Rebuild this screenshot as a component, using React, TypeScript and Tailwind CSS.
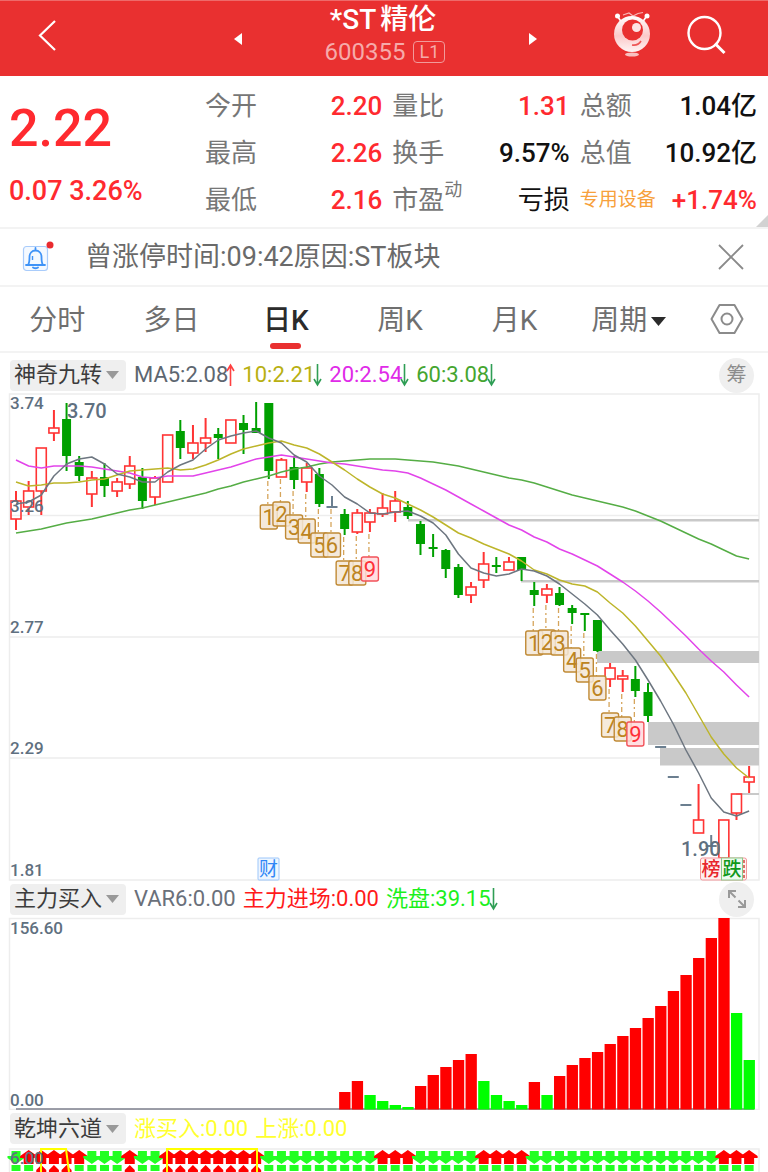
import { ReactNode } from "react";

type Kind = "up" | "down" | "flat";
// kind, body top, body bottom, high, low
type Candle = [Kind, number, number, number, number];

const STEP = 12.64;
const xAt = (i: number) => 16 + i * STEP;

const FONT = "font-['Roboto','Noto_Sans_CJK_SC',sans-serif]";

const CANDLES: Candle[] = [
  ["up", 501, 519, 491, 530], ["up", 491, 507, 481, 515], ["up", 448, 491, 448, 515],
  ["up", 428, 433, 410, 441], ["down", 419, 456, 403, 471], ["down", 462, 476, 456, 481],
  ["up", 478, 494, 471, 507], ["down", 477, 486, 463, 497], ["up", 482, 491, 478, 497],
  ["up", 466, 484, 456, 489], ["down", 477, 501, 468, 509], ["up", 478, 497, 476, 505],
  ["up", 435, 482, 435, 482], ["down", 431, 448, 420, 459], ["up", 443, 453, 425, 459],
  ["up", 438, 443, 418, 452], ["down", 434, 438, 428, 459], ["up", 420, 443, 420, 443],
  ["down", 423, 430, 415, 454], ["down", 428, 433, 402, 433], ["down", 403, 471, 403, 479],
  ["up", 460, 477, 458, 477], ["down", 467, 480, 456, 489], ["up", 468, 482, 463, 492],
  ["down", 474, 504, 468, 507], ["flat", 506, 507, 496, 507], ["down", 514, 529, 509, 535],
  ["up", 513, 532, 509, 534], ["up", 513, 522, 509, 532], ["up", 508, 514, 493, 517],
  ["up", 501, 512, 491, 522], ["down", 507, 516, 501, 519], ["down", 524, 544, 521, 555],
  ["down", 547, 549, 534, 557], ["down", 550, 569, 549, 578], ["down", 567, 595, 564, 598],
  ["up", 587, 595, 582, 603], ["up", 564, 580, 552, 588], ["down", 565, 567, 557, 573],
  ["up", 562, 570, 557, 570], ["down", 557, 570, 557, 581], ["down", 590, 595, 582, 606],
  ["up", 589, 595, 584, 603], ["down", 593, 605, 587, 606], ["down", 608, 613, 605, 624],
  ["down", 613, 615, 613, 631], ["down", 620, 651, 620, 652], ["up", 668, 679, 663, 687],
  ["up", 676, 679, 670, 692], ["down", 679, 691, 666, 697], ["down", 692, 716, 683, 722],
  ["flat", 746, 747, 746, 747], ["flat", 776, 777, 776, 777], ["flat", 804, 805, 804, 805],
  ["up", 820, 833, 784, 833], ["flat", 845, 846, 835, 846], ["up", 820, 858, 820, 858],
  ["up", 794, 813, 794, 820], ["up", 777, 782, 766, 793],
];

const MA5 = [
  504, 502, 495, 476, 464, 459, 457, 464, 474, 477, 482, 482, 472, 465, 460, 449, 440, 436, 433, 431,
  438, 443, 455, 462, 476, 485, 497, 504, 513, 514, 512, 511, 516, 523, 535, 554, 568, 573, 576, 574,
  569, 571, 576, 584, 594, 604, 615, 630, 644, 660, 680, 701, 724, 750, 773, 798, 812, 816, 811,
];
const MA10 = [
  482, 486, 485, 483, 483, 482, 480, 479, 475, 471, 470, 469, 468, 470, 469, 465, 460, 454, 449, 446,
  443, 441, 445, 448, 454, 462, 470, 479, 487, 494, 498, 504, 510, 517, 525, 533, 538, 544, 549, 554,
  561, 570, 574, 580, 584, 586, 592, 603, 613, 626, 641, 656, 674, 693, 715, 737, 754, 768, 778,
];
const MA20 = [
  460, 466, 468, 466, 466, 466, 467, 469, 471, 473, 477, 478, 476, 476, 476, 473, 470, 467, 463, 459,
  457, 455, 457, 459, 461, 463, 464, 466, 468, 470, 471, 473, 478, 484, 490, 497, 504, 511, 518, 525,
  530, 537, 542, 549, 554, 560, 566, 574, 582, 591, 601, 612, 624, 636, 649, 661, 672, 685, 697,
];
const MA60 = [
  533, 531, 529, 526, 523, 521, 519, 516, 513, 510, 508, 505, 502, 499, 496, 493, 489, 486, 482, 479,
  476, 472, 469, 467, 464, 462, 461, 460, 459, 459, 459, 460, 461, 462, 464, 466, 469, 472, 475, 478,
  480, 483, 487, 491, 495, 498, 501, 504, 507, 511, 516, 521, 527, 533, 539, 544, 550, 556, 559,
];

// candle index, badge centre y, digit
const TURNS: [number, number, number][] = [
  [20, 517, 1], [21, 514, 2], [22, 527, 3], [23, 531, 4], [24, 545, 5], [25, 545, 6], [26, 573, 7], [27, 573, 8], [28, 569, 9],
  [41, 643, 1], [42, 642, 2], [43, 643, 3], [44, 660, 4], [45, 670, 5], [46, 688, 6], [47, 725, 7], [48, 729, 8], [49, 734, 9],
];

// first bar sits at candle 26
const BARS: [string, number][] = [
  ["r", 1092], ["r", 1081], ["g", 1095], ["g", 1101], ["g", 1105], ["g", 1107], ["r", 1086], ["r", 1075], ["r", 1067],
  ["r", 1060], ["r", 1054], ["g", 1081], ["g", 1095], ["g", 1101], ["g", 1105], ["r", 1082], ["g", 1095], ["r", 1076],
  ["r", 1065], ["r", 1058], ["r", 1052], ["r", 1044], ["r", 1036], ["r", 1028], ["r", 1018], ["r", 1006], ["r", 991],
  ["r", 975], ["r", 958], ["r", 938], ["r", 918], ["g", 1013], ["g", 1060],
];

const TREND = "grrrrrgggrggrrrrrrrrgggggggggrrrgggggrrrrgggggggggggggggrrr";

const line = (ys: number[]) => ys.map((y, i) => `${xAt(i).toFixed(1)},${y}`).join(" ");

function CandleMark({ candle, i }: { candle: Candle; i: number }) {
  const [kind, top, bottom, high, low] = candle;
  const x = xAt(i);
  if (kind === "flat") {
    return (
      <g stroke="#6b7f90" strokeWidth={2}>
        <path d={`M${x - 5.5} ${bottom}h11`} />
        {high < top && <path d={`M${x} ${high}V${low}`} />}
      </g>
    );
  }
  if (kind === "down") {
    return (
      <g fill="#00a000" stroke="#00a000">
        <path d={`M${x} ${high}V${low}`} strokeWidth={2} />
        <rect x={x - 4.5} y={top} width={9} height={bottom - top} stroke="none" />
      </g>
    );
  }
  return (
    <g fill="none" stroke="#ff3434" strokeWidth={1.6}>
      <path d={`M${x} ${high}V${top}M${x} ${bottom}V${low}`} strokeWidth={2} />
      <rect x={x - 5} y={top} width={10} height={bottom - top} />
    </g>
  );
}

function TurnBadge({ i, y, n }: { i: number; y: number; n: number }) {
  const x = xAt(i);
  const low = CANDLES[i][4];
  const last = n === 9;
  return (
    <g>
      <path d={`M${x - 1} ${low + 2}V${y - 12}`} stroke="#d6a55c" strokeWidth={1.3} strokeDasharray="5 3 2 3" />
      <rect
        x={x - 8.5} y={y - 12} width={17} height={24} rx={2} strokeWidth={1.4}
        fill={last ? "#ffd9dc" : "#f3e6d6"} fillOpacity={0.85} stroke={last ? "#f2525a" : "#c08a35"}
      />
      <text x={x} y={y + 8} fontSize={22} textAnchor="middle" fill={last ? "#ff3038" : "#bd8420"}>{n}</text>
    </g>
  );
}

function PriceChart() {
  return (
    <svg viewBox="0 393 768 488" className="block w-full" role="img" aria-label="日K">
      <g fill="none" stroke="#ededed" strokeWidth={1.5}>
        <rect x={9.5} y={394} width={749.5} height={486} />
        <path d="M9.5 515.5H759M9.5 637H759M9.5 758H759" />
      </g>
      <g fill="#c9c9c9">
        <rect x={408} y={519} width={351} height={2.5} />
        <rect x={521} y={580} width={238} height={2.5} />
        <rect x={597} y={651} width={162} height={12} />
        <rect x={648} y={722} width={111} height={23} />
        <rect x={660} y={748} width={99} height={17.5} />
        <rect x={736} y={793} width={23} height={2} />
      </g>
      {CANDLES.map((c, i) => <CandleMark key={i} candle={c} i={i} />)}
      {TURNS.map(([i, y, n]) => <TurnBadge key={i} i={i} y={y} n={n} />)}
      <g fill="none" strokeWidth={1.5} strokeLinejoin="round">
        <polyline points={line(MA60)} stroke="#55ad45" />
        <polyline points={line(MA20)} stroke="#e244ea" />
        <polyline points={line(MA10)} stroke="#bdb52a" />
        <polyline points={line(MA5)} stroke="#6d7680" />
      </g>
      <g fontSize={17} fontWeight={500} fill="#5f7080">
        <text x={10} y={409}>3.74</text>
        <text x={10} y={512}>3.26</text>
        <text x={10} y={633}>2.77</text>
        <text x={10} y={754}>2.29</text>
        <text x={10} y={876}>1.81</text>
      </g>
      <g fontSize={20} fontWeight={500} fill="#5f7080">
        <text x={67} y={418}>3.70</text>
        <text x={681} y={856}>1.90</text>
      </g>
      <g fontSize={19} fontWeight={500} textAnchor="middle">
        <rect x={258} y={858} width={21} height={22} rx={1} fill="#eef6ff" stroke="#9cc6fa" />
        <text x={268.5} y={876} fontWeight={400} fill="#2f86f6">财</text>
        <rect x={700.5} y={858} width={46} height={22} rx={2} fill="#fff0f0" stroke="#f3959a" />
        <text x={711} y={876} fill="#e8262c">榜</text>
        <path d="M744 860v18" stroke="#d0453a" strokeWidth={1.5} strokeDasharray="3 2" />
        <rect x={721.5} y={858} width={21} height={22} fill="#effaef" stroke="#8ccb8c" />
        <text x={732} y={876} fill="#10981a">跌</text>
      </g>
    </svg>
  );
}

function ForceChart() {
  return (
    <svg viewBox="0 917 768 193" className="block w-full" role="img" aria-label="主力买入">
      <rect x={9.5} y={918.5} width={749.5} height={191} fill="none" stroke="#ededed" strokeWidth={1.5} />
      <path d="M16 1109H754" stroke="#7d7f8c" strokeWidth={1.5} />
      {BARS.map(([c, top], i) => (
        <rect key={i} x={xAt(i + 26) - 5.5} y={top} width={11.3} height={1109.5 - top} fill={c === "r" ? "#ff0000" : "#00ff00"} />
      ))}
      <g fontSize={17} fontWeight={500} fill="#5f7080">
        <text x={10} y={934}>156.60</text>
        <text x={10} y={1106}>0.00</text>
      </g>
    </svg>
  );
}

function TrendChart() {
  return (
    <svg viewBox="0 1147 768 25" className="block w-full" role="img" aria-label="乾坤六道">
      <path d="M9.5 1172V1149H759V1172" fill="none" stroke="#ededed" strokeWidth={1.5} />
      {TREND.split("").map((c, i) => {
        const x = xAt(i);
        const boxed = (i >= 2 && i <= 4) || (i >= 12 && i <= 19);
        return (
          <g key={i}>
            {c === "r"
              ? <path d={`M${x} 1150l8.500 6v2h-3.500v6h-10v-6h-3.500v-2z`} fill="#ff0000" />
              : <path d={`M${x - 4.5} 1151h9v5h4v2l-8.500 6l-8.500-6v-2h4z`} fill="#22ff22" />}
            {boxed || i === 9
              ? <path d={`M${x} 1165l5 5v2h-10v-2z`} fill="#ff0000" />
              : <rect x={x - 4.5} y={1165} width={9} height={6} fill="#22ff22" />}
          </g>
        );
      })}
      <g fill="none" stroke="#ffff00" strokeWidth={2}>
        <path d="M41 1172V1149H66L69 1172" />
        <path d="M167 1172V1149H257V1172" />
      </g>
      <text x={10} y={1164} fontSize={17} fontWeight={500} fill="#5f7080">6.00</text>
    </svg>
  );
}

function Trend({ up }: { up?: boolean }) {
  return (
    <svg width="9" height="24" viewBox="0 0 9 24" className="-ml-0.5 shrink-0" fill="none" stroke={up ? "#ff4040" : "#2f9e55"} strokeWidth="1.6" aria-hidden="true">
      {up ? <path d="M4.500 23V2M1 8l3.500-6L8 8" /> : <path d="M4.500 1v21M1 16l3.500 6L8 16" />}
    </svg>
  );
}

function IndicatorRow({ name, children, action }: { name: string; children: ReactNode; action?: ReactNode }) {
  return (
    <div className="flex items-center pl-[10px] pr-[14px]">
      <button className="flex h-[31px] w-[116px] shrink-0 items-center gap-1 rounded-sm bg-[#efefef] pl-1 text-[22px] leading-none text-[#3c3c3c]">
        {name}
        <svg width="13" height="8" viewBox="0 0 13 8" fill="#999" aria-hidden="true"><path d="M0 0h13L6.500 8z" /></svg>
      </button>
      <div className="ml-2 flex flex-1 items-center gap-[7px] whitespace-nowrap text-[22px] leading-[30px]">{children}</div>
      {action}
    </div>
  );
}

function Stat({ label, value, tone, sup }: { label: ReactNode; value: string; tone: string; sup?: string }) {
  return (
    <div className="flex h-[47px] items-center justify-between whitespace-nowrap text-[26px] leading-none">
      <span className="flex items-center text-[#777]">
        {label}
        {sup && <sup className="-top-2.5 text-[18px] leading-none">{sup}</sup>}
      </span>
      <span className={tone}>{value}</span>
    </div>
  );
}

function Header() {
  return (
    <header className="flex h-[76px] items-center border-t border-[#ee6a6a] bg-[#e93030] pb-2 text-white">
      <div className="flex flex-1 items-center justify-between pl-[36px]">
        <button aria-label="返回">
          <svg width="22" height="34" viewBox="0 0 22 34" fill="none" stroke="#fff" strokeWidth="2.2"><path d="M19 3L4 17.500L19 32" /></svg>
        </button>
        <button aria-label="上一只" className="flex w-4 justify-center pt-2">
          <svg width="8" height="12" viewBox="0 0 8 12" fill="#fff"><path d="M8 0v12L0 6z" /></svg>
        </button>
      </div>
      <div className="flex w-[271px] flex-col items-center">
        <h1 className="flex gap-1 pl-1 text-[28px] font-medium leading-[34px]"><span>*ST</span><span>精伦</span></h1>
        <div className="flex items-center gap-2 pl-2 text-[24px] leading-[30px] text-[#f6aaaa]">
          600355
          <span className="flex h-[22px] w-8 items-center justify-center rounded-sm border border-[#f19a9a] text-[18px] leading-none">L1</span>
        </div>
      </div>
      <div className="flex flex-1 items-center justify-between pr-[42px]">
        <button aria-label="下一只" className="flex w-5 justify-end pt-2">
          <svg width="8" height="12" viewBox="0 0 8 12" fill="#fff"><path d="M0 0v12l8-6z" /></svg>
        </button>
        <div className="flex items-center gap-[33px]">
          <button aria-label="智能助手">
            <svg width="42" height="48" viewBox="0 0 42 48" fill="none">
              <defs>
                <linearGradient id="ball" x1="0" y1="0" x2="0" y2="1">
                  <stop offset="0" stopColor="#ffffff" />
                  <stop offset="0.55" stopColor="#fbc9c9" />
                  <stop offset="1" stopColor="#fff4f4" />
                </linearGradient>
              </defs>
              <path d="M7 6l4 6M35 6l-4 6" stroke="#fff" strokeWidth="1.6" />
              <circle cx="6.500" cy="5" r="2.500" fill="#fff" />
              <circle cx="36" cy="5" r="2.500" fill="#fff" />
              <path d="M12 4l6-2l4 3l5-2.500l5-1" stroke="#f9b5b5" strokeWidth="1.2" />
              <circle cx="21" cy="23" r="18" fill="url(#ball)" />
              <circle cx="21.500" cy="19" r="10.500" fill="#e93030" />
              <circle cx="25.500" cy="16.500" r="4.500" fill="#fde4e4" />
              <path d="M21 34q6 1 9-4" stroke="#e55" strokeWidth="1.6" />
              <ellipse cx="21" cy="43.500" rx="7" ry="2" fill="#f8c0c0" />
            </svg>
          </button>
          <button aria-label="搜索">
            <svg width="40" height="40" viewBox="0 0 40 40" fill="none" stroke="#fff" strokeWidth="2.400"><circle cx="18.500" cy="18" r="16" /><path d="M29 28.500L38.500 38" strokeWidth="3" /></svg>
          </button>
        </div>
      </div>
    </header>
  );
}

function Quote() {
  return (
    <section className="relative flex h-[153px] items-center border-b-2 border-[#f3f3f3] pt-0.5">
      <div className="flex w-[205px] shrink-0 flex-col gap-2 pl-[9px] font-medium text-[#ff2a2f]">
        <div className="text-[52px] leading-[60px]">2.22</div>
        <div className="whitespace-nowrap pt-2 text-[27px] leading-8">0.07 3.26%</div>
      </div>
      <div className="grid flex-1 grid-cols-3 gap-x-[10px] pr-[11px]">
        <Stat label="今开" value="2.20" tone="font-medium text-[#ff2a2f]" />
        <Stat label="量比" value="1.31" tone="font-medium text-[#ff2a2f]" />
        <Stat label="总额" value="1.04亿" tone="font-medium text-[#111]" />
        <Stat label="最高" value="2.26" tone="font-medium text-[#ff2a2f]" />
        <Stat label="换手" value="9.57%" tone="font-medium text-[#111]" />
        <Stat label="总值" value="10.92亿" tone="font-medium text-[#111]" />
        <Stat label="最低" value="2.16" tone="font-medium text-[#ff2a2f]" />
        <Stat label="市盈" sup="动" value="亏损" tone="text-[#111]" />
        <Stat label={<a href="#sector" className="text-[19px] text-[#f7a13c]">专用设备</a>} value="+1.74%" tone="font-medium text-[#ff2a2f]" />
      </div>
      <svg width="12" height="12" viewBox="0 0 12 12" fill="#d2d2d2" className="absolute bottom-0 right-0" aria-hidden="true"><path d="M12 0v12H0z" /></svg>
    </section>
  );
}

function Notice() {
  return (
    <section className="flex h-[58px] items-center border-b-2 border-[#f3f3f3] pl-[22px] pr-6 text-[27px] text-[#6a6a6a]">
      <svg width="34" height="34" viewBox="0 0 34 34" fill="none" aria-hidden="true">
        <rect x="1.500" y="6.500" width="24" height="24" rx="3" fill="#f4f9ff" stroke="#a9ccfb" strokeWidth="1.200" />
        <path d="M4 25h19M6 25c1.500-2 1.500-4 1.500-8c0-4 2.500-6.500 6-6.500s6 2.500 6 6.500c0 4 0 6 1.500 8M13.500 8v2.500M11 27.500q2.500 1.500 5 0" stroke="#3f93f7" strokeWidth="1.800" strokeLinecap="round" />
        <path d="M10.500 16v4" stroke="#3f93f7" strokeWidth="1.400" />
        <circle cx="28" cy="5" r="3.500" fill="#e92b2f" />
      </svg>
      <p className="ml-[29px] flex-1 whitespace-nowrap leading-none">曾涨停时间:09:42原因:ST板块</p>
      <button aria-label="关闭">
        <svg width="26" height="26" viewBox="0 0 26 26" fill="none" stroke="#8a8a8a" strokeWidth="1.800"><path d="M1 1l24 24M25 1L1 25" /></svg>
      </button>
    </section>
  );
}

const TABS = ["分时", "多日", "日K", "周K", "月K", "周期"];

function Tabs() {
  return (
    <nav className="flex h-[66px] items-stretch border-b-2 border-[#f3f3f3] text-[28px] text-[#6f6f6f]">
      {TABS.map((tab) => {
        const active = tab === "日K";
        return (
          <button key={tab} className={`relative flex flex-1 items-center justify-center gap-1 pt-1 leading-none ${active ? "font-medium text-[#2b2b2b]" : ""}`}>
            {tab}
            {tab === "周期" && <svg width="15" height="9" viewBox="0 0 15 9" fill="#2b2b2b" aria-hidden="true"><path d="M0 0h15L7.500 9z" /></svg>}
            {active && <span className="absolute bottom-0.5 h-[6px] w-[31px] rounded-full bg-[#e93030]" />}
          </button>
        );
      })}
      <button aria-label="设置" className="flex w-[82px] items-center justify-center">
        <svg width="34" height="32" viewBox="0 0 34 32" fill="none" stroke="#8b8b8b" strokeWidth="2"><path d="M9.500 2h15L32.500 16l-8 14h-15L1.500 16z" strokeLinejoin="round" /><circle cx="17" cy="16" r="5.500" /></svg>
      </button>
    </nav>
  );
}

export default function App() {
  return (
    <main className={`${FONT} w-full overflow-hidden bg-white`}>
      <Header />
      <Quote />
      <Notice />
      <Tabs />
      <div className="flex h-10 flex-col justify-center pt-1">
        <IndicatorRow
          name="神奇九转"
          action={<button className="size-[35px] rounded-full bg-[#efefef] text-[20px] leading-none text-[#8c8c8c]">筹</button>}
        >
          <span className="flex items-center text-[#5d6670]">MA5:2.08<Trend up /></span>
          <span className="flex items-center text-[#b8b012]">10:2.21<Trend /></span>
          <span className="flex items-center text-[#e02be8]">20:2.54<Trend /></span>
          <span className="flex items-center text-[#45a52f]">60:3.08<Trend /></span>
        </IndicatorRow>
      </div>
      <PriceChart />
      <div className="flex h-9 flex-col justify-center">
        <IndicatorRow
          name="主力买入"
          action={
            <button aria-label="放大" className="flex size-[35px] items-center justify-center rounded-full bg-[#efefef]">
              <svg width="20" height="20" viewBox="0 0 20 20" fill="none" stroke="#999" strokeWidth="2"><path d="M2 9V2h7M2 2l6.500 6.500M18 11v7h-7M18 18l-6.500-6.500" /></svg>
            </button>
          }
        >
          <span className="text-[#6a707a]">VAR6:0.00</span>
          <span className="text-[#ff1a1a]">主力进场:0.00</span>
          <span className="flex items-center text-[#1cf01c]">洗盘:39.15<Trend /></span>
        </IndicatorRow>
      </div>
      <ForceChart />
      <div className="flex h-[37px] flex-col justify-center">
        <IndicatorRow name="乾坤六道">
          <span className="text-[#ffff2e]">涨买入:0.00</span>
          <span className="text-[#ffff2e]">上涨:0.00</span>
        </IndicatorRow>
      </div>
      <TrendChart />
    </main>
  );
}
